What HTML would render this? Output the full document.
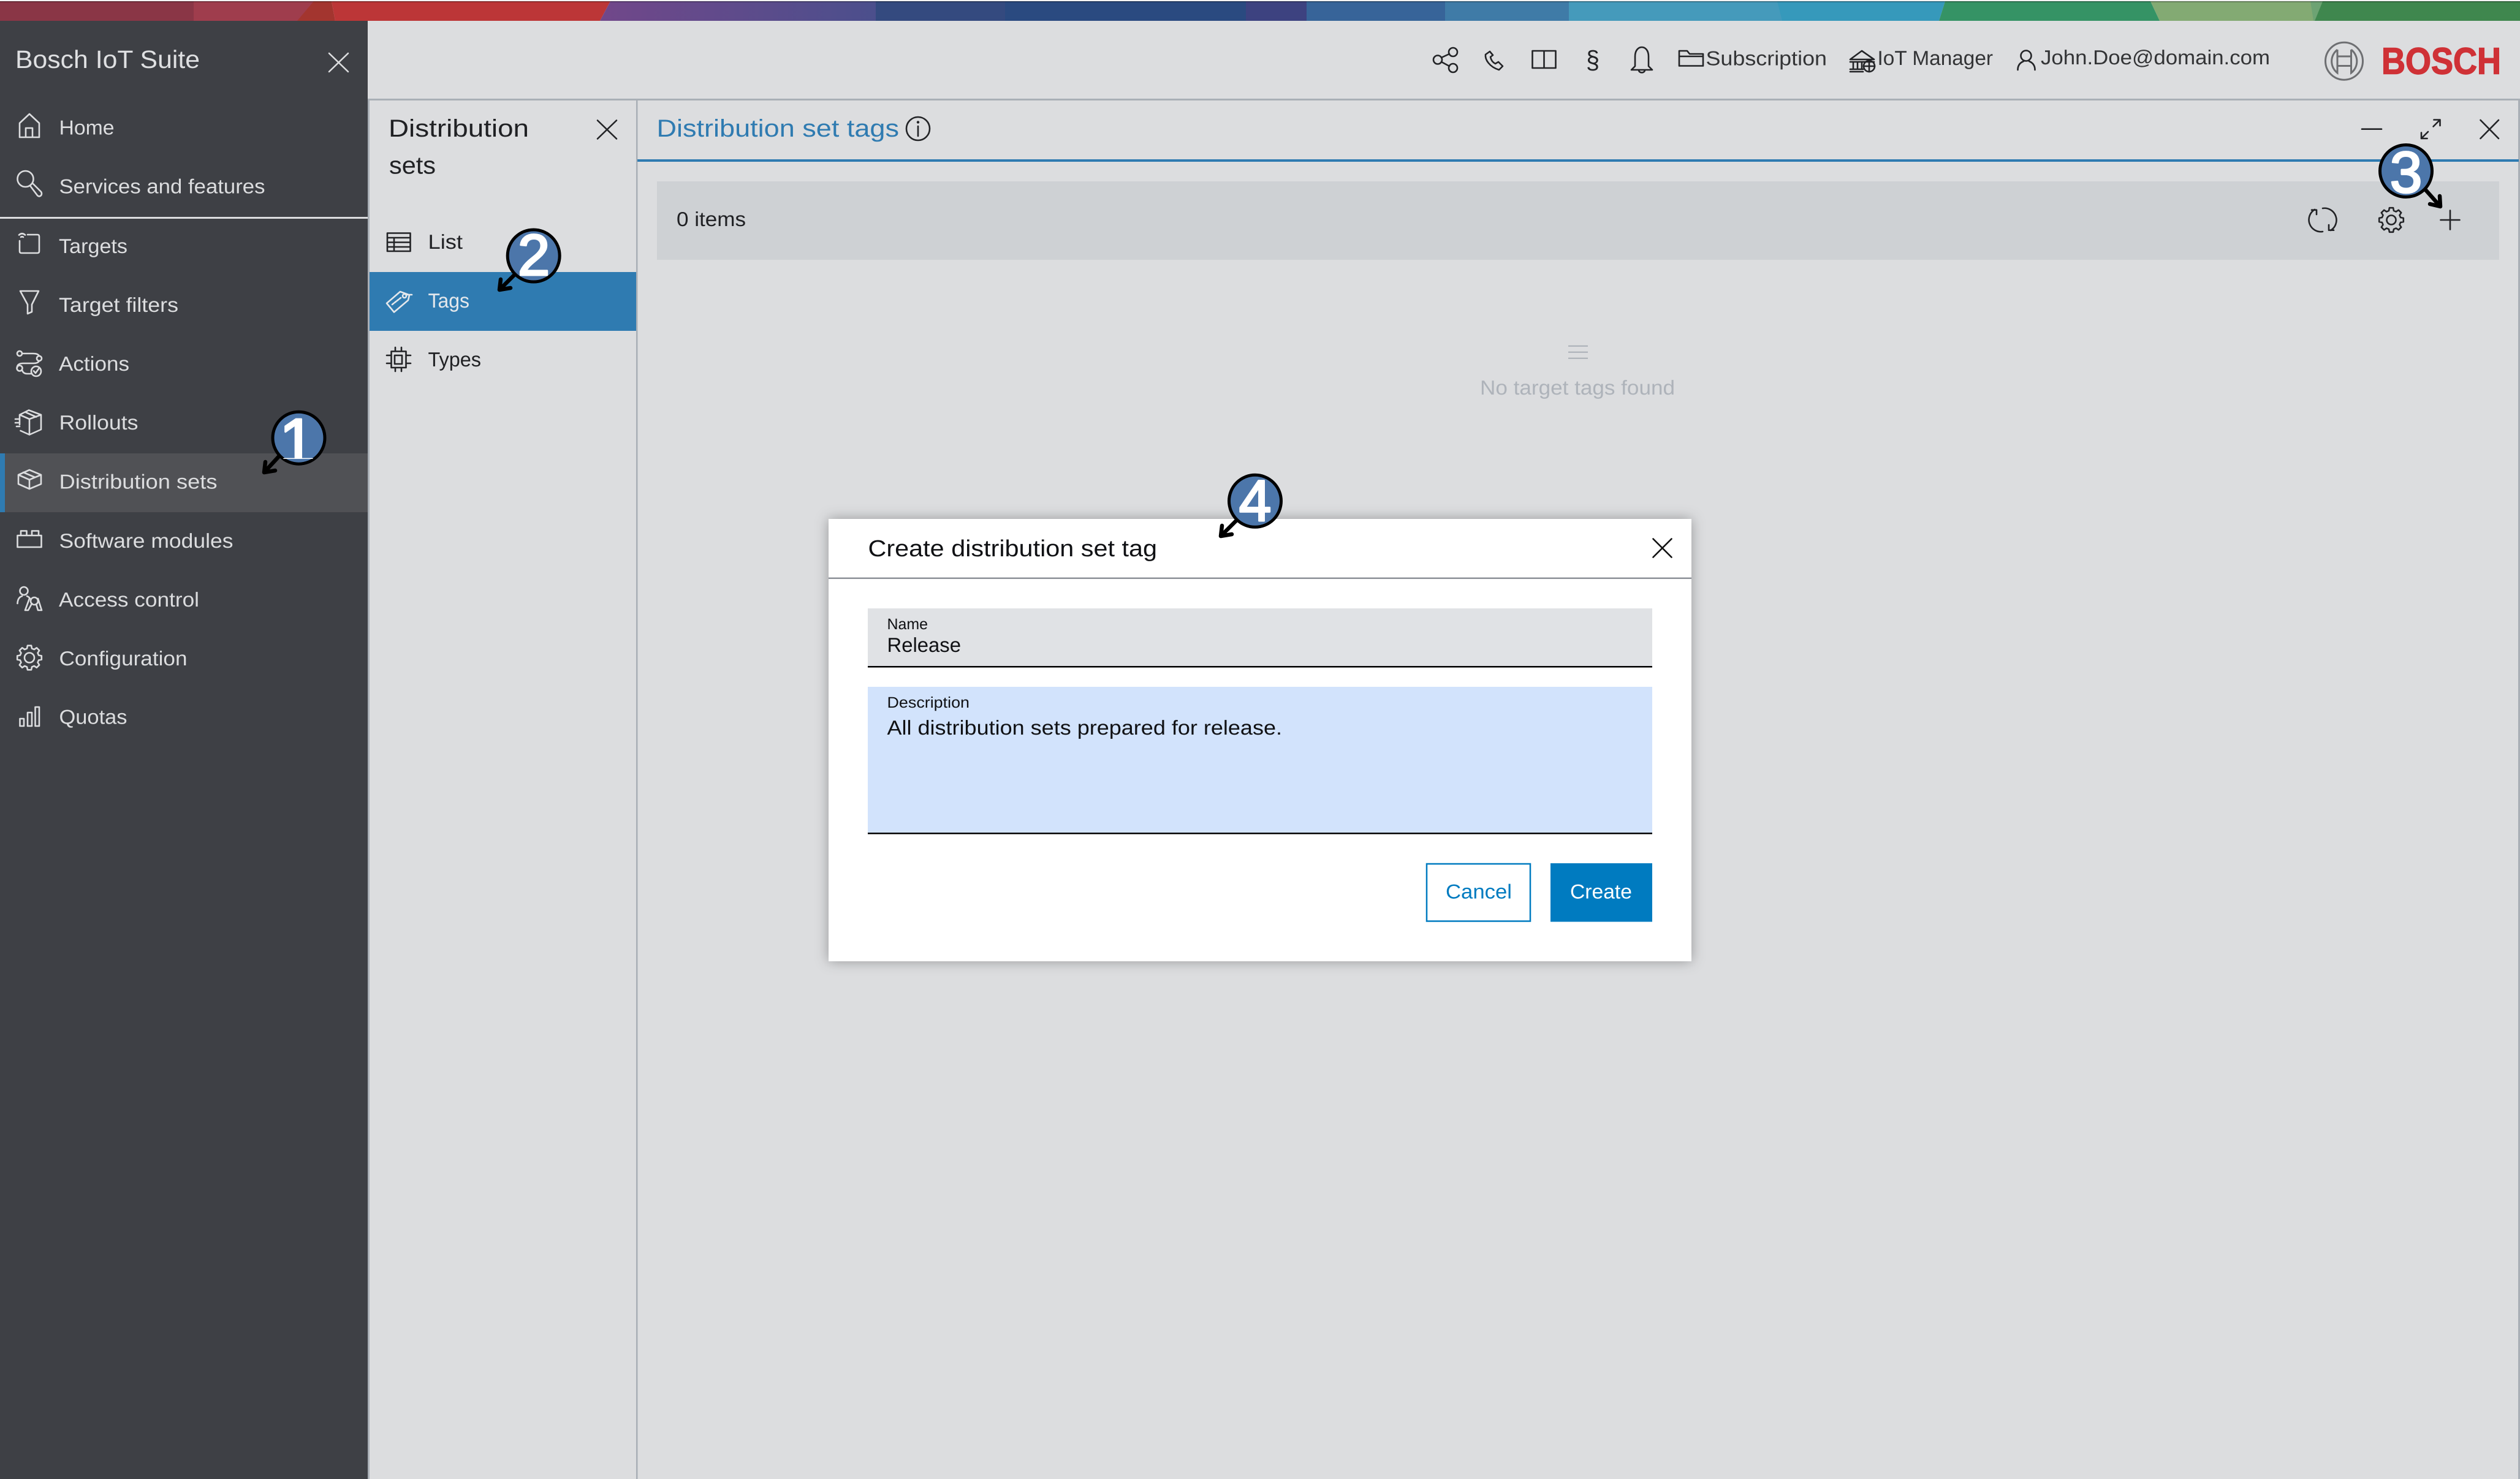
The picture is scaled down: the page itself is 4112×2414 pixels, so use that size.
<!DOCTYPE html>
<html lang="en">
<head>
<meta charset="utf-8">
<title>Create distribution set tag</title>
<style>
html,body{margin:0;padding:0;background:#dcdddf;width:4112px;height:2414px;overflow:hidden}
svg{display:block}
text{font-family:"Liberation Sans",sans-serif;text-rendering:geometricPrecision}
.nav{font-size:33px;fill:#dcdddf}
.dark{font-size:33px;fill:#202124}
.head{font-size:33px;fill:#333436}
.ic{fill:none;stroke:#dcdddf;stroke-width:2.6;stroke-linejoin:round;stroke-linecap:round}
.id{fill:none;stroke:#222326;stroke-width:2.6;stroke-linejoin:round;stroke-linecap:round}
.arrow{fill:none;stroke:#000;stroke-width:6.5;stroke-linecap:round;stroke-linejoin:round}
.badge{fill:#4c76aa;stroke:#000;stroke-width:5}
.digit{font-size:95px;fill:#fff;stroke:#fff;stroke-width:3;stroke-linejoin:round;text-anchor:middle}
</style>
</head>
<body>
<svg xmlns="http://www.w3.org/2000/svg" width="4112" height="2414" viewBox="0 0 4112 2414">
<defs>
<linearGradient id="pur" x1="0" x2="1" y1="0" y2="0"><stop offset="0" stop-color="#71478a"/><stop offset="1" stop-color="#4b4f8c"/></linearGradient>
<filter id="sh" x="-5%" y="-8%" width="110%" height="116%"><feDropShadow dx="0" dy="0" stdDeviation="11" flood-color="#000" flood-opacity=".32"/></filter>
<clipPath id="c1"><rect x="440" y="670" width="90" height="79"/></clipPath>
</defs>

<rect width="4112" height="2414" fill="#dcdddf"/>

<!-- top band -->
<rect width="4112" height="2" fill="#f4f4f4"/>
<rect x="0" y="2" width="316" height="32" fill="#8a3646"/>
<rect x="316" y="2" width="200" height="32" fill="#9f3d4d"/>
<polygon points="512,2 541,2 547,34 485,34" fill="#a3352f"/>
<polygon points="541,2 996,2 979,34 547,34" fill="#bc3637"/>
<polygon points="996,2 1432,2 1429,34 979,34" fill="url(#pur)"/>
<rect x="1429" y="2" width="212" height="32" fill="#344a7f"/>
<rect x="1640" y="2" width="394" height="32" fill="#2a4a80"/>
<rect x="2033" y="2" width="100" height="32" fill="#3d4280"/>
<rect x="2132" y="2" width="227" height="32" fill="#376499"/>
<rect x="2358" y="2" width="203" height="32" fill="#3f7ba7"/>
<rect x="2560" y="2" width="352" height="32" fill="#459abb"/>
<polygon points="2900,2 3174,2 3164,34 2908,34" fill="#3699bb"/>
<polygon points="3174,2 3509,2 3524,34 3164,34" fill="#359365"/>
<polygon points="3509,2 3790,2 3777,34 3524,34" fill="#83aa73"/>
<polygon points="3770,2 3790,2 3777,34 3775,34" fill="#6da373"/>
<polygon points="3790,2 4112,2 4112,34 3777,34" fill="#3f874e"/>
<rect y="2" width="4112" height="1.5" fill="#000" opacity=".35"/>

<!-- sidebar -->
<rect x="0" y="34" width="600" height="2380" fill="#3e4045"/>
<rect x="0" y="740" width="600" height="96" fill="#505155"/>
<rect x="0" y="740" width="8" height="96" fill="#2f7bb1"/>
<rect x="0" y="354" width="600" height="3" fill="#dcdddf"/>
<text x="25" y="111" font-size="41" fill="#dfe0e2" textLength="301" lengthAdjust="spacingAndGlyphs">Bosch IoT Suite</text>
<path class="ic" d="M537 87 L568 117 M568 87 L537 117"/>

<text class="nav" x="96.5" y="219.5" textLength="90" lengthAdjust="spacingAndGlyphs">Home</text>
<text class="nav" x="96.5" y="315.5" textLength="336" lengthAdjust="spacingAndGlyphs">Services and features</text>
<text class="nav" x="96" y="413" textLength="112" lengthAdjust="spacingAndGlyphs">Targets</text>
<text class="nav" x="96" y="509" textLength="195" lengthAdjust="spacingAndGlyphs">Target filters</text>
<text class="nav" x="96" y="605" textLength="115" lengthAdjust="spacingAndGlyphs">Actions</text>
<text class="nav" x="96.5" y="701" textLength="129" lengthAdjust="spacingAndGlyphs">Rollouts</text>
<text class="nav" x="96.5" y="797.5" textLength="258" lengthAdjust="spacingAndGlyphs">Distribution sets</text>
<text class="nav" x="96.5" y="894" textLength="284" lengthAdjust="spacingAndGlyphs">Software modules</text>
<text class="nav" x="96" y="990" textLength="229" lengthAdjust="spacingAndGlyphs">Access control</text>
<text class="nav" x="96.5" y="1086" textLength="209" lengthAdjust="spacingAndGlyphs">Configuration</text>
<text class="nav" x="96.5" y="1181.5" textLength="111" lengthAdjust="spacingAndGlyphs">Quotas</text>

<!-- sidebar icons -->
<path class="ic" d="M32 224 V201 L48 186 L64 201 V224 Z M42 224 V209 H53 V224"/>
<circle class="ic" cx="41.5" cy="292" r="13"/>
<path class="ic" d="M49 303 L61 319 Q64 322 67 319 Q69 316 67 313 L54 300"/>
<path class="ic" d="M45 383 H61 Q64 383 64 386 V410 Q64 413 61 413 H35 Q32 413 32 410 V393 M31 383.5 Q36 379 41 383.5 M34 387 Q36 385.5 38 387"/>
<path class="ic" d="M33 475 H63 L52 497 V509 L45 512 V497 Z"/>
<circle class="ic" cx="32" cy="577" r="4"/><circle class="ic" cx="64" cy="585" r="4"/><circle class="ic" cx="32" cy="601" r="4.5"/><circle class="ic" cx="59" cy="606" r="8"/>
<path class="ic" d="M36 577 H54 Q62 577 64 581 M64 589 Q62 593 55 593 H38 Q28 593 28 600 M36 604 Q38 610 44 610 H51"/>
<path class="ic" d="M55 605.5 L58 609 L63 602"/>
<path class="ic" d="M47 669.5 L67 677 V701 L48 709.5 L33.5 703 M32 693 V677 L47 669.5 M32 677 L48 684 L67 677 M48 684 V709.5 M41 672.5 L59 680.5 M25 684 H31 M25 690 H31 M27 696 H32"/>
<path class="ic" d="M48 767 L67 775 V790 L48 798 L30 790 V775 Z M30 775 L48 783 L67 775 M48 783 V798 M38 771 L57 779"/>
<path class="ic" d="M28.5 874 H67.5 V893 H28.5 Z M34 874 V866.5 H43.5 V874 M52 874 V866.5 H63 V874"/>
<circle class="ic" cx="39" cy="964.5" r="6.5"/>
<path class="ic" d="M28.5 985 Q29 975 36 973 M44 973 Q47 974 49 977"/>
<circle class="ic" cx="56" cy="981" r="6"/>
<path class="ic" d="M41 996 H46 L52 985 M67 996 H62 L59 986 M48 977 L41 996 M62 977 L68 996"/>
<g transform="translate(48 1073.5)"><polygon class="ic" points="15.1,-4 19.8,-3.1 19.8,3.1 15.1,4 13.5,7.8 16.2,11.8 11.8,16.2 7.8,13.5 4,15.1 3.1,19.8 -3.1,19.8 -4,15.1 -7.8,13.5 -11.8,16.2 -16.2,11.8 -13.5,7.8 -15.1,4 -19.8,3.1 -19.8,-3.1 -15.1,-4 -13.5,-7.8 -16.2,-11.8 -11.8,-16.2 -7.8,-13.5 -4,-15.1 -3.1,-19.8 3.1,-19.8 4,-15.1 7.8,-13.5 11.8,-16.2 16.2,-11.8 13.5,-7.8"/><circle class="ic" r="8"/></g>
<path class="ic" d="M32.5 1173 H39 V1185 H32.5 Z M45 1163 H52 V1185 H45 Z M57.5 1154 H64 V1185 H57.5 Z"/>

<!-- header/panel lines -->
<rect x="600" y="161" width="3512" height="3" fill="#a9afb6"/>
<rect x="600" y="161" width="3" height="2253" fill="#a9afb6"/>
<rect x="1038" y="161" width="2.5" height="2253" fill="#a9afb6"/>
<rect x="4109" y="161" width="3" height="2253" fill="#a9afb6"/>

<!-- panel 2 -->
<rect x="603" y="444" width="435" height="96" fill="#2f7bb1"/>
<text x="634" y="223" font-size="40" fill="#202124" textLength="229" lengthAdjust="spacingAndGlyphs">Distribution</text>
<text x="635" y="283.5" font-size="40" fill="#202124" textLength="76" lengthAdjust="spacingAndGlyphs">sets</text>
<path class="id" d="M975 196.5 L1006 226.5 M1006 196.5 L975 226.5"/>
<text class="dark" x="698.5" y="406" textLength="56.5" lengthAdjust="spacingAndGlyphs">List</text>
<text x="698.5" y="502" font-size="33" fill="#e4e8ec" textLength="67.5" lengthAdjust="spacingAndGlyphs">Tags</text>
<text class="dark" x="698.5" y="598" textLength="86.5" lengthAdjust="spacingAndGlyphs">Types</text>
<path class="id" d="M632 380.5 H669.5 V410 H632 Z M632 388 H669.5 M632 395.5 H669.5 M632 403 H669.5 M643 388 V410"/>
<path class="ic" style="stroke:#e4e8ec" d="M631 495 L653 476 L668 481.5 L666 490 L643 509.5 Z M672 481 H664"/>
<circle class="ic" style="stroke:#e4e8ec" cx="660" cy="483" r="3"/>
<path class="ic" style="stroke:#e4e8ec" stroke-dasharray="3 2" d="M640 497 L654 486"/>
<path class="id" d="M638.5 573.5 H662.5 V600 H638.5 Z M644 580 H656 V594 H644 Z M645 567 V573 M655 567 V573 M645 600 V606 M655 600 V606 M631 580 H638 M631 593 H638 M663 580 H670 M663 593 H670"/>

<!-- top header -->
<circle class="id" cx="2346" cy="97.5" r="7"/><circle class="id" cx="2371" cy="85" r="7"/><circle class="id" cx="2371" cy="111" r="7"/>
<path class="id" d="M2352 94 L2365 88 M2352 101 L2365 108"/>
<path class="id" d="M2431 84 L2424 89 C2423 97 2430 109 2446 114 L2452 108 L2445 101 L2440 104 C2436 102 2433 98 2432 93 L2436 90 Z"/>
<path class="id" d="M2500.5 83 H2538.5 V111 H2500.5 Z M2519.5 83 V111"/>
<text x="2588" y="112" font-size="42" fill="#222326" textLength="22" lengthAdjust="spacingAndGlyphs">§</text>
<path class="id" d="M2668 108 V92 C2668 72 2690 72 2690 92 V108 L2696 114 H2662 Z M2674 114 C2674 120 2684 120 2684 114"/>
<path class="id" d="M2740 107.5 V83 H2753 L2757 88 H2779 V107.5 Z M2740 92 H2779"/>
<text class="head" x="2783.5" y="106.5" textLength="197.5" lengthAdjust="spacingAndGlyphs">Subscription</text>
<path class="id" d="M3019 97 L3038 83 L3058 97 Z M3019 101 H3058 M3024 101 V112 M3031 101 V112 M3038 101 V112 M3019 113 H3040 M3019 117 H3040"/>
<circle class="id" cx="3050" cy="108" r="9"/><path class="id" d="M3041 108 H3059 M3050 99 V117"/>
<text class="head" x="3063.5" y="106" textLength="188.5" lengthAdjust="spacingAndGlyphs">IoT Manager</text>
<circle class="id" cx="3306" cy="91" r="8.5"/>
<path class="id" d="M3292.5 114 C3292.5 106 3297 102 3302 100 M3320.5 114 C3320.5 106 3316 102 3311 100"/>
<text class="head" x="3330" y="105" textLength="374" lengthAdjust="spacingAndGlyphs">John.Doe@domain.com</text>

<!-- logo -->
<circle cx="3825" cy="99.7" r="30.5" fill="none" stroke="#6e6f72" stroke-width="3"/>
<path fill="none" stroke="#6e6f72" stroke-width="3" d="M3814 81 A 24 24 0 0 0 3814 119 V81 M3836.5 81 A 24 24 0 0 1 3836.5 119 V81 M3814 92 H3836.5 M3814 107.5 H3836.5"/>
<text x="3886" y="120.5" font-size="61" font-weight="700" fill="#cf3136" stroke="#cf3136" stroke-width="1.5" textLength="195" lengthAdjust="spacingAndGlyphs">BOSCH</text>

<!-- main header -->
<text x="1071.5" y="223" font-size="40" fill="#2f7bb1" textLength="395.5" lengthAdjust="spacingAndGlyphs">Distribution set tags</text>
<circle class="id" cx="1498" cy="210" r="19"/>
<path class="id" d="M1498 206 V222"/><circle cx="1498" cy="199.5" r="2.2" fill="#222326"/>
<rect x="1040" y="260" width="3070" height="4" fill="#2f7bb1"/>
<path class="id" d="M3854 210.7 H3886"/>
<path class="id" d="M3951 226 L3962 215 M3970.5 206.5 L3981.5 195.5 M3951 216.5 V226 H3960.5 M3971.5 195.5 H3981.5 V205"/>
<path class="id" d="M4047.5 196 L4077 226 M4077 196 L4047.5 226"/>

<!-- toolbar -->
<rect x="1072" y="296" width="3006" height="128" fill="#ced1d4"/>
<text class="dark" x="1104" y="369" textLength="113" lengthAdjust="spacingAndGlyphs">0 items</text>
<path class="id" d="M3790 340 A19.5 19.5 0 0 1 3803 376 M3800 367 V375.7 H3808 M3790 378 A19.5 19.5 0 0 1 3777 342 M3780 350 V342.7 H3772"/>
<g transform="translate(3902 359)"><polygon class="id" points="15.1,-4 19.8,-3.1 19.8,3.1 15.1,4 13.5,7.8 16.2,11.8 11.8,16.2 7.8,13.5 4,15.1 3.1,19.8 -3.1,19.8 -4,15.1 -7.8,13.5 -11.8,16.2 -16.2,11.8 -13.5,7.8 -15.1,4 -19.8,3.1 -19.8,-3.1 -15.1,-4 -13.5,-7.8 -16.2,-11.8 -11.8,-16.2 -7.8,-13.5 -4,-15.1 -3.1,-19.8 3.1,-19.8 4,-15.1 7.8,-13.5 11.8,-16.2 16.2,-11.8 13.5,-7.8"/><circle class="id" r="7.5"/></g>
<path class="id" d="M3982.5 359 H4013.5 M3998 343.5 V374.5"/>

<!-- empty state -->
<path fill="none" stroke="#a9afb6" stroke-width="2" d="M2559 564.7 H2591 M2559 574.7 H2591 M2559 584.7 H2591"/>
<text x="2415" y="644" font-size="33" fill="#aeb3ba" textLength="318" lengthAdjust="spacingAndGlyphs">No target tags found</text>

<!-- modal -->
<rect x="1352" y="847" width="1408" height="722" fill="#fff" filter="url(#sh)"/>
<rect x="1352" y="942.5" width="1408" height="2.5" fill="#8d9198"/>
<text x="1416.5" y="908" font-size="38" fill="#101114" textLength="471.5" lengthAdjust="spacingAndGlyphs">Create distribution set tag</text>
<path class="id" style="stroke:#111" d="M2697.5 879.5 L2727.5 909.5 M2727.5 879.5 L2697.5 909.5"/>
<rect x="1416" y="993" width="1280" height="94" fill="#e0e2e5"/>
<rect x="1416" y="1087" width="1280" height="2.5" fill="#000"/>
<text x="1447.5" y="1027" font-size="25" fill="#101114" textLength="66.5" lengthAdjust="spacingAndGlyphs">Name</text>
<text x="1447.5" y="1064" font-size="33" fill="#101114" textLength="120.5" lengthAdjust="spacingAndGlyphs">Release</text>
<rect x="1416" y="1121" width="1280" height="238" fill="#d2e3fc"/>
<rect x="1416" y="1359" width="1280" height="2.5" fill="#000"/>
<text x="1447.5" y="1155" font-size="25" fill="#101114" textLength="134.5" lengthAdjust="spacingAndGlyphs">Description</text>
<text x="1447.5" y="1199" font-size="33" fill="#101114" textLength="644.5" lengthAdjust="spacingAndGlyphs">All distribution sets prepared for release.</text>
<rect x="2328" y="1410" width="169" height="93.5" fill="#fff" stroke="#007bc0" stroke-width="2.5"/>
<text x="2359" y="1466.5" font-size="33" fill="#007bc0" textLength="108" lengthAdjust="spacingAndGlyphs">Cancel</text>
<rect x="2530" y="1409" width="166" height="95.5" fill="#007bc0"/>
<text x="2562" y="1466.5" font-size="33" fill="#fff" textLength="101" lengthAdjust="spacingAndGlyphs">Create</text>

<!-- annotation badges -->
<path class="arrow" d="M455 745 L431 771 M431 771 L433 754 M431 771 L449 768"/>
<circle class="badge" cx="487.5" cy="714.7" r="42.5"/>
<text class="digit" x="485" y="757" style="font-size:106px" clip-path="url(#c1)">1</text>

<path class="arrow" d="M841 447 L815 473 M815 473 L817 456 M815 473 L833 470"/>
<circle class="badge" cx="870.7" cy="417.5" r="42.5"/>
<text class="digit" x="871" y="449">2</text>

<path class="arrow" d="M3958 310 L3982 337 M3982 337 L3981 320 M3982 337 L3965 333"/>
<circle class="badge" cx="3926" cy="279" r="42.5"/>
<text class="digit" x="3926" y="314">3</text>

<path class="arrow" d="M2018 849 L1992 875 M1992 875 L1994 858 M1992 875 L2010 872"/>
<circle class="badge" cx="2048" cy="817.8" r="42.5"/>
<text class="digit" x="2048" y="850">4</text>
</svg>
</body>
</html>
